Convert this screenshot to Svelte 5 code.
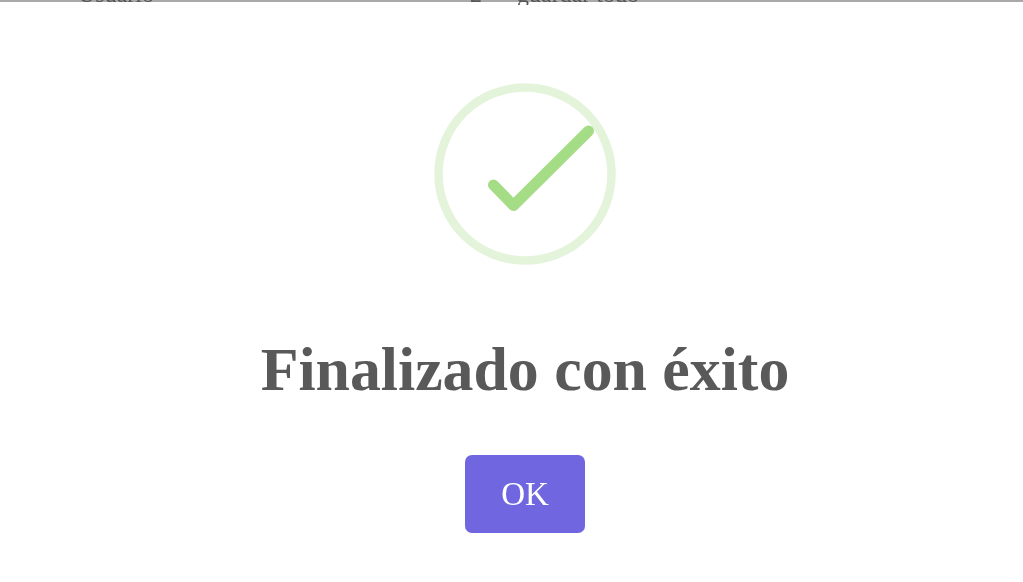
<script>
  let title = 'Finalizado con éxito';
  let label = 'OK';
</script>

<div class="page">
  <div class="behind">
    <span class="menu-a">Usuario</span>
    <span class="menu-b">2</span>
    <span class="menu-c">guardar todo</span>
  </div>
  <div class="modal">
    <svg class="icon" width="182" height="182" viewBox="0 0 182 182" aria-hidden="true">
      <circle cx="91" cy="91" r="86.5" fill="none" stroke="#e4f4db" stroke-width="8.5" />
      <path d="M59.5 102 L79.5 122.5 L154.5 48" fill="none" stroke="#a5dc86" stroke-width="11" stroke-linecap="round" stroke-linejoin="round" />
    </svg>
    <h2 class="title">{title}</h2>
    <button class="ok">{label}</button>
  </div>
</div>

<style>
  :global(body) {
    margin: 0;
    background: #fff;
  }

  .page {
    width: 1023px;
    height: 582px;
    overflow: hidden;
    position: relative;
    display: flex;
    flex-direction: column;
    font-family: "Liberation Serif", "Times New Roman", serif;
  }

  .behind {
    position: absolute;
    z-index: 1;
    top: 0;
    left: 0;
    right: 0;
    height: 5px;
    overflow: hidden;
    display: flex;
    align-items: flex-start;
    padding-left: 78px;
    background: linear-gradient(#a9a9a9 0 2px, transparent 2px);
    color: #555;
    font-size: 24px;
    line-height: 24px;
    filter: blur(0.4px);
  }

  .behind span {
    flex: none;
    margin-top: -18px;
  }

  .menu-b {
    margin-left: 316px;
  }

  .menu-c {
    margin-left: 35px;
  }

  .modal {
    flex: 1;
    margin-top: 2px;
    padding: 81px 0 0 27px;
    border-radius: 5px 5px 0 0;
    background: #fff;
    display: flex;
    flex-direction: column;
    align-items: center;
    filter: blur(0.4px);
  }

  .icon {
    display: block;
  }

  .title {
    margin: 65px 0 0;
    font-size: 61.8px;
    line-height: 78px;
    font-weight: 700;
    color: #595959;
  }

  .ok {
    margin-top: 47px;
    width: 120px;
    height: 78px;
    border: 0;
    border-radius: 7px;
    background: #7066e0;
    color: #fff;
    font-family: inherit;
    font-size: 33px;
    padding: 0;
  }
</style>
